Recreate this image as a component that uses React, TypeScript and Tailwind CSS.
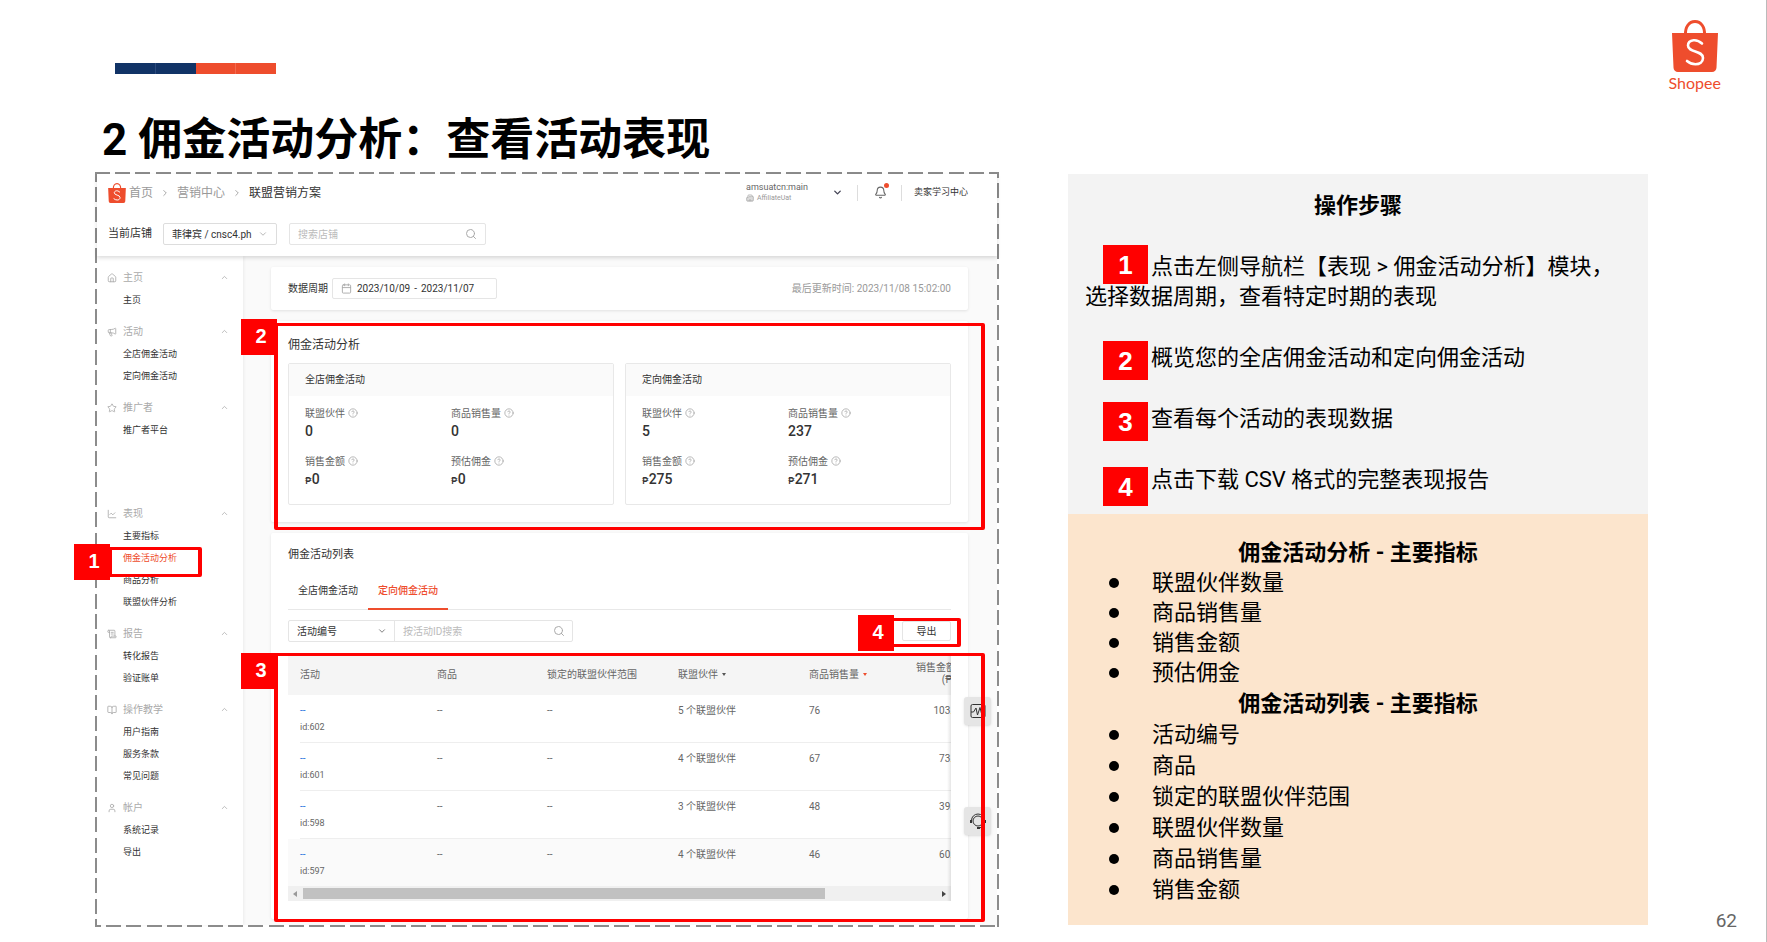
import { useState } from "react";
import {
    Bell,
    BookOpen,
    Building2,
    Calendar,
    ChartLine,
    ChevronDown,
    ChevronRight,
    ChevronUp,
    HelpCircle,
    House,
    Megaphone,
    ScrollText,
    Search,
    Star,
    User,
} from "lucide-react";

const menu = [
    { name: "主页", icon: House, items: ["主页"] },
    { name: "活动", icon: Megaphone, items: ["全店佣金活动", "定向佣金活动"] },
    { name: "推广者", icon: Star, items: ["推广者平台"], spaced: true },
    { name: "表现", icon: ChartLine, items: ["主要指标", "佣金活动分析", "商品分析", "联盟伙伴分析"] },
    { name: "报告", icon: ScrollText, items: ["转化报告", "验证账单"] },
    { name: "操作教学", icon: BookOpen, items: ["用户指南", "服务条款", "常见问题"] },
    { name: "帐户", icon: User, items: ["系统记录", "导出"] },
]

const summary = [
    {
        title: "全店佣金活动",
        stats: [
            { label: "联盟伙伴", value: "0" },
            { label: "商品销售量", value: "0" },
            { label: "销售金额", value: "0", money: true },
            { label: "预估佣金", value: "0", money: true },
        ],
    },
    {
        title: "定向佣金活动",
        stats: [
            { label: "联盟伙伴", value: "5" },
            { label: "商品销售量", value: "237" },
            { label: "销售金额", value: "275", money: true },
            { label: "预估佣金", value: "271", money: true },
        ],
    },
]

const campaigns = [
    { id: 602, partners: 5, sold: 76, sales: "103." },
    { id: 601, partners: 4, sold: 67, sales: "73." },
    { id: 598, partners: 3, sold: 48, sales: "39." },
    { id: 597, partners: 4, sold: 46, sales: "60." },
]

const Marker = ({ n, className }: { n: number, className: string }) => (
    <span className={`absolute z-20 flex h-9 w-9 items-center justify-center bg-[#ff0000] pb-[2px] pl-1 font-['Liberation_Sans',Arial,sans-serif] text-[20px] leading-none font-bold text-white ${className}`}>
        {n}
    </span>
)

const Highlight = ({ className }: { className: string }) => (
    <span className={`pointer-events-none absolute z-10 rounded-[2px] border-x-4 border-y-3 border-[#ff0000] ${className}`} />
)

const Bag = ({ className }: { className: string }) => (
    <svg viewBox="0 0 46 52" className={className} aria-hidden="true">
        <path d="M13.5 15C13 7 17 1.5 23 1.5S33 7 32.500 15" fill="none" stroke="#ee4d2d" strokeWidth="3" />
        <path d="M0 13h46l-1.500 34.500a4.500 4.500 0 0 1-4.500 4.500H6a4.500 4.500 0 0 1-4.500-4.500z" fill="#ee4d2d" />
        <path d="M30 23.500c-3-2.700-6-3.500-8.500-3.200-3.500.4-5.500 2.700-5.500 5.200 0 7.500 15 4.500 15 12.500 0 4-3.500 6.200-7.500 6.200-3.500 0-6.300-1.300-8.500-3.200" fill="none" stroke="#fff" strokeWidth="2.600" strokeLinecap="round" />
    </svg>
)

const Pulse = () => (
    <svg viewBox="0 0 16 16" className="h-4 w-4" fill="none" stroke="#333" aria-hidden="true">
        <rect x="1" y="1.500" width="14" height="13" rx="1.500" />
        <path d="M1 9h2.500L6 5l1.500 7L10 4.500l1.500 6L13 8h2" strokeLinejoin="round" />
    </svg>
)

const Headset = () => (
    <svg viewBox="0 0 16 16" className="h-4 w-4" fill="none" stroke="#333" aria-hidden="true">
        <circle cx="8" cy="8" r="5" />
        <path d="M1.500 9.500V7.500a6.500 6.500 0 0 1 13 0v2M14.500 10c-.5 2.500-2 4-4.500 4.800" />
        <path d="M1 7v3M15 7v3M7 15h3" strokeWidth="2" />
    </svg>
)

// the four dashed edges round the seller centre screen
const DashedFrame = () => (
    <div aria-hidden="true" className="pointer-events-none">
        <span className="absolute inset-x-0 top-0 h-[2px] bg-[repeating-linear-gradient(to_right,#8c8c8c_0_15px,transparent_15px_20px,#8c8c8c_20px_35px,transparent_35px_40px,#8c8c8c_40px_55px,transparent_55px_61px)]" />
        <span className="absolute inset-x-0 bottom-0 h-[2px] bg-[repeating-linear-gradient(to_right,#8c8c8c_0_6px,transparent_6px_11px,#8c8c8c_11px_26px,transparent_26px_31px,#8c8c8c_31px_46px,transparent_46px_52px,#8c8c8c_52px_61px)]" />
        <span className="absolute inset-y-0 left-0 w-[2px] bg-[repeating-linear-gradient(to_bottom,#8c8c8c_0_10px,transparent_10px_15px,#8c8c8c_15px_30px,transparent_30px_35px,#8c8c8c_35px_50px,transparent_50px_56px,#8c8c8c_56px_61px)]" />
        <span className="absolute inset-y-0 right-0 w-[2px] bg-[repeating-linear-gradient(to_bottom,#8c8c8c_0_6px,transparent_6px_11px,#8c8c8c_11px_26px,transparent_26px_31px,#8c8c8c_31px_46px,transparent_46px_52px,#8c8c8c_52px_61px)]" />
    </div>
)

const TopBar = () => (
    <header className="relative z-[5] h-[82px] bg-white shadow-[0_2px_4px_rgba(0,0,0,0.14)]">
        <div className="flex h-[37px] items-center pr-[29px] pl-[11px] text-[12px]">
            <Bag className="h-[20px] w-[18px]" />
            <nav className="ml-[3px] flex items-center gap-[7px] text-[#999]">
                <a href="#home">首页</a>
                <ChevronRight className="h-[10px] w-[10px]" />
                <a href="#marketing">营销中心</a>
                <ChevronRight className="h-[10px] w-[10px]" />
                <span className="text-[#333]">联盟营销方案</span>
            </nav>
            <button className="ml-auto flex items-center text-left">
                <span className="w-[86px]">
                    <span className="block text-[9px] leading-[11px] text-[#666]">amsuatcn:main</span>
                    <span className="flex items-center gap-[3px] text-[7px] leading-[10px] text-[#999]">
                        <Building2 className="h-2 w-2" />AffiliateUat
                    </span>
                </span>
                <ChevronDown className="h-[11px] w-[11px] text-[#445]" strokeWidth={3} />
            </button>
            <span className="ml-[14px] h-4 w-px bg-[#ddd]" />
            <button aria-label="通知" className="relative ml-[16px]">
                <Bell className="h-[13px] w-[13px] text-[#666]" strokeWidth={2} />
                <span className="absolute -top-[3px] -right-[2px] h-[5px] w-[5px] rounded-full bg-[#ee4d2d]" />
            </button>
            <span className="ml-[14px] h-4 w-px bg-[#ddd]" />
            <a href="#learn" className="ml-[12px] text-[9px] text-[#333]">卖家学习中心</a>
        </div>
        <div className="flex items-center pt-[12px] pl-[11px] text-[10px]">
            <label htmlFor="shop" className="text-[11px] text-[#333]">当前店铺</label>
            <div className="relative ml-[11px]">
                <select id="shop" className="h-[22px] w-[114px] appearance-none rounded-[2px] border border-[#ddd] bg-white pl-2 text-[#333]">
                    <option>菲律宾 / cnsc4.ph</option>
                </select>
                <ChevronDown className="pointer-events-none absolute top-[6px] right-[9px] h-[10px] w-[10px] text-[#aaa]" />
            </div>
            <div className="relative ml-3">
                <input aria-label="搜索店铺" placeholder="搜索店铺" className="h-[22px] w-[197px] rounded-[2px] border border-[#e5e5e5] pl-2 placeholder:text-[#bbb]" />
                <Search className="absolute top-[5px] right-[9px] h-3 w-3 text-[#aaa]" />
            </div>
        </div>
    </header>
)

const Sidebar = () => (
    <aside className="w-[146px] shrink-0 bg-white pt-[10px] pl-[10px] shadow-[1px_0_3px_rgba(0,0,0,0.06)]">
        {menu.map(({ name, icon: Icon, items, spaced }) => (
            <div key={name} className={spaced ? "mb-[61px]" : "mb-[9px]"}>
                <button className="flex h-[23px] w-full items-center pr-[14px] text-[10px] text-[#aaa]">
                    <Icon className="mr-[6px] h-[10px] w-[10px]" strokeWidth={2} />
                    {name}
                    <ChevronUp className="ml-auto h-[9px] w-[9px]" strokeWidth={2} />
                </button>
                <ul className="pl-4 text-[9px] leading-[22px] text-[#333]">
                    {items.map((item) => (
                        <li key={item} className="relative">
                            <a href="#menu" className={item === "佣金活动分析" ? "block text-[#ee4d2d]" : "block"}>{item}</a>
                            {item === "佣金活动分析" && (
                                <>
                                    <Highlight className="top-0 -left-[15px] h-[30px] w-[94px]" />
                                    <Marker n={1} className="-top-[3px] -left-[49px]" />
                                </>
                            )}
                        </li>
                    ))}
                </ul>
            </div>
        ))}
    </aside>
)

const Summary = () => (
    <section className="relative mt-[11px] rounded-[2px] bg-white px-[17px] pt-[15px] pb-[17px] shadow-[0_1px_3px_rgba(0,0,0,0.1)]">
        <h2 className="text-[12px] leading-[18px] text-[#333]">佣金活动分析</h2>
        <div className="mt-[9px] grid grid-cols-2 gap-[11px]">
            {summary.map((card) => (
                <div key={card.title} className="rounded-[2px] border border-[#e8e8e8]">
                    <h3 className="h-8 bg-[#fafafa] px-4 text-[10px] leading-8 text-[#333]">{card.title}</h3>
                    <dl className="grid grid-cols-2 gap-y-3 px-4 pt-[9px] pb-[13px]">
                        {card.stats.map((stat) => (
                            <div key={stat.label}>
                                <dt className="flex h-4 items-center gap-[3px] text-[10px] text-[#666]">
                                    {stat.label}
                                    <HelpCircle className="h-[10px] w-[10px] text-[#aaa]" strokeWidth={2} />
                                </dt>
                                <dd className="text-[14px] leading-5 font-medium text-[#333]">
                                    {stat.money && <span className="text-[9px]">₱</span>}{stat.value}
                                </dd>
                            </div>
                        ))}
                    </dl>
                </div>
            ))}
        </div>
        <Highlight className="top-[2px] -right-[17px] -bottom-[8px] left-[3px]" />
        <Marker n={2} className="-top-[2px] -left-[30px]" />
    </section>
)

const CampaignList = () => {

    const [tab, setTab] = useState("定向佣金活动")

    return (
        <section className="mt-[11px] rounded-[2px] bg-white px-[17px] pt-[13px] pb-[18px] shadow-[0_1px_3px_rgba(0,0,0,0.1)]">
            <h2 className="text-[11px] leading-[18px] text-[#333]">佣金活动列表</h2>

            <div className="mt-[11px] flex border-b border-[#e8e8e8] text-[10px] leading-4">
                {["全店佣金活动", "定向佣金活动"].map((name) => (
                    <button
                        key={name}
                        onClick={() => setTab(name)}
                        className={`-mb-px border-b-2 px-[10px] pt-2 pb-[9px] ${tab === name ? "border-[#ee4d2d] font-medium text-[#ee4d2d]" : "border-transparent text-[#333]"}`}
                    >
                        {name}
                    </button>
                ))}
            </div>

            <div className="mt-[10px] flex text-[10px]">
                <div className="relative">
                    <select aria-label="搜索类型" className="h-[22px] w-[107px] appearance-none rounded-l-[2px] border border-[#e5e5e5] bg-white pl-2 text-[#333]">
                        <option>活动编号</option>
                    </select>
                    <ChevronDown className="pointer-events-none absolute top-[6px] right-[8px] h-[10px] w-[10px] text-[#666]" />
                </div>
                <div className="relative -ml-px">
                    <input aria-label="按活动ID搜索" placeholder="按活动ID搜索" className="h-[22px] w-[179px] rounded-r-[2px] border border-[#e5e5e5] pl-2 placeholder:text-[#bbb]" />
                    <Search className="absolute top-[5px] right-[8px] h-3 w-3 text-[#aaa]" />
                </div>
                <div className="relative ml-auto">
                    <button className="mt-px h-5 w-[49px] rounded-[2px] border border-[#e5e5e5] bg-white text-[#333]">导出</button>
                    <Highlight className="-top-[2px] -right-[10px] -left-[12px] h-[29px]" />
                    <Marker n={4} className="-top-[5px] -left-[44px]" />
                </div>
            </div>

            <div className="relative mt-[11px]">
                <div className="overflow-hidden">
                    <table className="w-full table-fixed border-separate border-spacing-0 text-left text-[10px] text-[#666]">
                        <colgroup>
                            <col className="w-[12px]" />
                            <col className="w-[137px]" />
                            <col className="w-[110px]" />
                            <col className="w-[131px]" />
                            <col className="w-[131px]" />
                            <col />
                        </colgroup>
                        <thead>
                            <tr className="h-[42px] bg-[#f5f5f5] [&>th]:font-normal">
                                <th />
                                <th>活动</th>
                                <th>商品</th>
                                <th>锁定的联盟伙伴范围</th>
                                <th>
                                    <span className="flex items-center gap-1">
                                        联盟伙伴
                                        <i className="border-x-2 border-t-3 border-x-transparent border-t-[#555]" />
                                    </span>
                                </th>
                                <th>
                                    <span className="flex items-center justify-between">
                                        <span className="flex items-center gap-1">
                                            商品销售量
                                            <i className="border-x-2 border-t-3 border-x-transparent border-t-[#ee4d2d]" />
                                        </span>
                                        <span className="-mr-[5px] w-10 text-right leading-3">销售金额 (₱)</span>
                                    </span>
                                </th>
                            </tr>
                        </thead>
                        <tbody>
                            {campaigns.map((row) => (
                                <tr key={row.id} className="h-12 align-top leading-4 last:h-[47px] last:bg-[#fafafa] [&:not(:last-child)>td:not(:first-child)]:border-b [&>td]:border-[#eee] [&>td]:pt-2">
                                    <td />
                                    <td>
                                        <a href="#campaign" className="block text-[#2673dd]">--</a>
                                        <span className="block text-[9px]">id:{row.id}</span>
                                    </td>
                                    <td>--</td>
                                    <td>--</td>
                                    <td>{row.partners} 个联盟伙伴</td>
                                    <td>
                                        <span className="flex justify-between">
                                            <span>{row.sold}</span>
                                            <span className="-mr-[2px]">{row.sales}</span>
                                        </span>
                                    </td>
                                </tr>
                            ))}
                        </tbody>
                    </table>
                    <div className="flex h-[15px] items-center justify-between bg-[#f0f0f0] px-[5px]">
                        <i className="border-y-3 border-r-4 border-y-transparent border-r-[#999]" />
                        <span className="mr-auto ml-[6px] h-[11px] w-[80%] bg-[#c1c1c1]" />
                        <i className="border-y-3 border-l-4 border-y-transparent border-l-[#444]" />
                    </div>
                </div>
                <span className="pointer-events-none absolute inset-y-0 right-0 w-1 bg-linear-to-r from-transparent to-black/10" />
                <div className="absolute top-[44px] -right-[40px] flex flex-col gap-[82px]">
                    <button aria-label="数据诊断" className="flex h-7 w-[27px] items-center justify-center rounded-[3px] bg-[#e5e5e5] shadow">
                        <Pulse />
                    </button>
                    <button aria-label="客服" className="flex h-7 w-[27px] items-center justify-center rounded-[3px] bg-[#e5e5e5] shadow">
                        <Headset />
                    </button>
                </div>
                <Highlight className="top-0 -right-[34px] -bottom-[21px] -left-[14px]" />
                <Marker n={3} className="top-0 -left-[47px]" />
            </div>
        </section>
    )
}

const SellerCentre = () => (
    <div className="relative min-w-0 flex-[900] p-[2px]">
        <TopBar />
        <div className="flex bg-[#fafafa]">
            <Sidebar />
            <main className="min-w-0 flex-1 pt-[11px] pr-[29px] pb-[6px] pl-7">
                <section className="flex h-[43px] items-center rounded-[2px] bg-white px-[17px] text-[10px] text-[#333] shadow-[0_1px_3px_rgba(0,0,0,0.1)]">
                    <span>数据周期</span>
                    <button className="ml-1 flex h-[21px] w-[165px] items-center rounded-[2px] border border-[#e5e5e5] pl-2">
                        <Calendar className="mr-[5px] h-[11px] w-[11px] text-[#aaa]" />
                        <span>2023/10/09</span>
                        <span className="px-1">-</span>
                        <span>2023/11/07</span>
                    </button>
                    <span className="ml-auto text-[#999]">最后更新时间: 2023/11/08 15:02:00</span>
                </section>
                <Summary />
                <CampaignList />
            </main>
        </div>
        <DashedFrame />
    </div>
)

const StepMarker = ({ n, className }: { n: number, className: string }) => (
    <span className={`absolute left-[18px] flex h-[39px] w-[45px] items-center justify-center bg-[#ff0000] font-['Liberation_Sans',Arial,sans-serif] text-[26px] leading-none font-bold text-white ${className}`}>
        {n}
    </span>
)

const MetricList = ({ items, className }: { items: string[], className: string }) => (
    <ul className={className}>
        {items.map((item) => (
            <li key={item} className="flex items-center pl-6">
                <span className="mr-[33px] h-[10px] w-[10px] rounded-full bg-black" />
                {item}
            </li>
        ))}
    </ul>
)

const Guide = () => (
    <div className="mt-[2px] flex min-w-0 flex-[580] flex-col self-start text-[22px] text-black">
        <section className="bg-[#f3f3f3] px-[17px] pt-[17px] pb-[19px] leading-[30px]">
            <h2 className="text-center font-bold">操作步骤</h2>
            <ol className="mt-[31px] flex flex-col gap-[31px]">
                <li className="relative indent-[66px]">
                    <StepMarker n={1} className="-top-[7px] indent-0" />
                    点击左侧导航栏【表现 &gt; 佣金活动分析】模块，
                    <br />
                    <span className="block indent-0">选择数据周期，查看特定时期的表现</span>
                </li>
                <li className="relative pl-[66px]">
                    <StepMarker n={2} className="-top-[2px]" />
                    概览您的全店佣金活动和定向佣金活动
                </li>
                <li className="relative pl-[66px]">
                    <StepMarker n={3} className="-top-[2px]" />
                    查看每个活动的表现数据
                </li>
                <li className="relative pl-[66px]">
                    <StepMarker n={4} className="top-[2px]" />
                    点击下载 CSV 格式的完整表现报告
                </li>
            </ol>
        </section>
        <section className="bg-[#fce5cd] px-[17px] pt-[23px] pb-[20px] leading-[31px]">
            <h2 className="text-center font-bold">佣金活动分析 - 主要指标</h2>
            <MetricList items={["联盟伙伴数量", "商品销售量", "销售金额", "预估佣金"]} className="leading-[30px]" />
            <h2 className="text-center font-bold">佣金活动列表 - 主要指标</h2>
            <MetricList items={["活动编号", "商品", "锁定的联盟伙伴范围", "联盟伙伴数量", "商品销售量", "销售金额"]} className="leading-[31px]" />
        </section>
    </div>
)

const App = () => {
    return (
        <div className="relative min-h-screen overflow-hidden border-r border-[#bbb] bg-white font-[Roboto,'Noto_Sans_CJK_SC',sans-serif]">
            <div className="flex items-start pt-[63px] pl-[115px]">
                <div className="flex h-[11px] w-[161px]">
                    <span className="flex-1 border-r border-[#2c4a7c] bg-[#113366]" />
                    <span className="flex-1 bg-[#113366]" />
                    <span className="flex-1 border-r border-[#f26a4e] bg-[#ee4d2d]" />
                    <span className="flex-1 bg-[#ee4d2d]" />
                </div>
            </div>

            <div className="absolute top-5 right-[45px] flex flex-col items-center text-[#ee4d2d]">
                <Bag className="h-[52px] w-[46px]" />
                <span className="font-[Lato,sans-serif] text-[16px] leading-[22px]">Shopee</span>
            </div>

            <h1 className="mt-[34px] pl-[102px] text-[44px] leading-[64px] font-bold text-black">2 佣金活动分析：查看活动表现</h1>

            <div className="flex gap-[69px] pr-[118px] pl-[95px]">
                <SellerCentre />
                <Guide />
            </div>

            <span className="absolute right-[29px] bottom-[10px] text-[19px] leading-[22px] text-[#666]">62</span>
        </div>
    )
}

export default App;
